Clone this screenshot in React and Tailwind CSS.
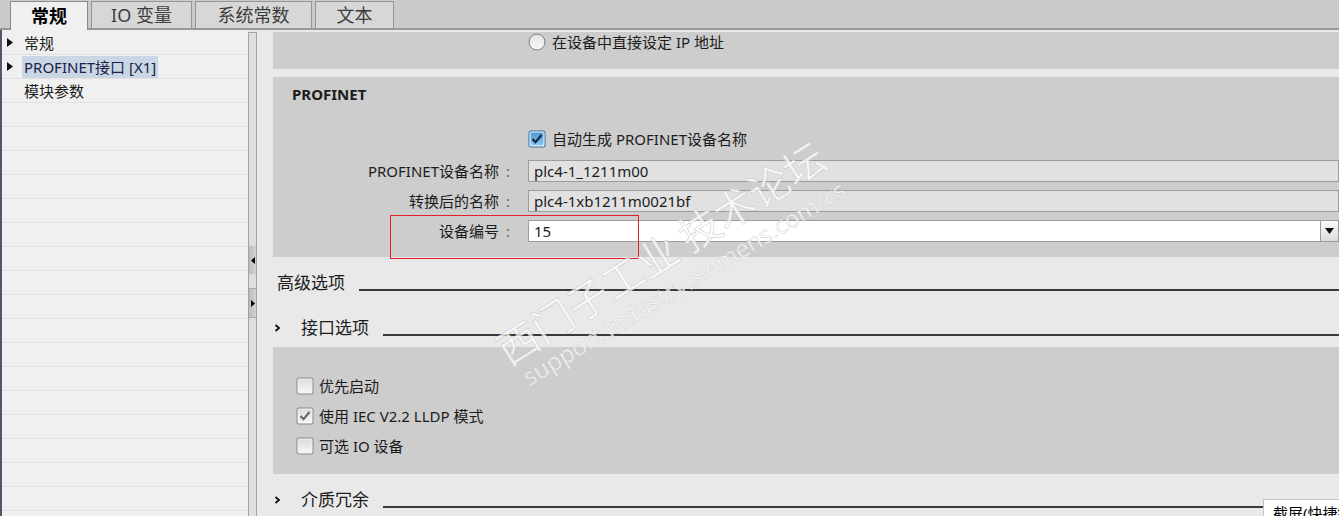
import React from 'react';

const fontStack = "font-['Noto_Sans','Noto_Sans_CJK_SC',sans-serif]";

const TreeArrow = () => (
  <svg width="6" height="9" viewBox="0 0 6 9">
    <path d="M0 0 L6 4.5 L0 9 Z" fill="#111" />
  </svg>
);

const Chevron = () => (
  <svg width="7" height="8" viewBox="0 0 7 8">
    <path d="M1.5 1 L5 4 L1.5 7" fill="none" stroke="#111" strokeWidth="1.8" />
  </svg>
);

const Radio = () => (
  <svg width="18" height="18" viewBox="0 0 18 18">
    <defs>
      <linearGradient id="rg" x1="0" y1="0" x2="0" y2="1">
        <stop offset="0" stopColor="#e2e2e2" />
        <stop offset="1" stopColor="#f8f8f8" />
      </linearGradient>
    </defs>
    <circle cx="9" cy="9" r="8" fill="url(#rg)" stroke="#7e7e7e" strokeWidth="1" />
  </svg>
);

const Checkbox = ({ checked, blue }) => (
  <svg width="18" height="18" viewBox="0 0 18 18">
    <defs>
      <linearGradient id="cbg" x1="0" y1="0" x2="0" y2="1">
        <stop offset="0" stopColor="#dcdcdc" />
        <stop offset="1" stopColor="#f6f6f6" />
      </linearGradient>
      <linearGradient id="cbb" x1="0" y1="0" x2="0" y2="1">
        <stop offset="0" stopColor="#4d9ad8" />
        <stop offset="1" stopColor="#8cc6f2" />
      </linearGradient>
    </defs>
    <rect x="0.5" y="0.5" width="17" height="17" rx="2.5" fill={blue ? '#2f6da3' : '#8a8a8a'} />
    <rect x="1.5" y="1.5" width="15" height="15" rx="1.5" fill={blue ? '#ffffff' : '#f4f4f4'} />
    <rect x="2.5" y="2.5" width="13" height="13" rx="1" fill={blue ? 'url(#cbb)' : 'url(#cbg)'} />
    {checked && (
      <path
        d="M4.5 9 L7.5 12.2 L13.5 5"
        fill="none"
        stroke={blue ? '#10263f' : '#6a6a6a'}
        strokeWidth="2.2"
      />
    )}
  </svg>
);

const Field = ({ label, value, white }) => (
  <div className="flex h-[22px] items-center">
    <div className="w-[226px] text-right leading-[22px]">{label}</div>
    <div className="w-[29px] pl-[7px] leading-[22px] text-[#666]">:</div>
    {white ? (
      <div className="flex-1 flex h-[22px]">
        <div className="flex-1 h-full bg-white border border-[#9c9c9c] border-r-0 pl-[5px] leading-[20px]">{value}</div>
        <div className="w-[19px] h-full border border-[#9c9c9c] bg-gradient-to-b from-[#fbfbfb] to-[#dcdcdc] flex items-center justify-center">
          <svg width="9" height="6" viewBox="0 0 9 6">
            <path d="M0 0 H9 L4.5 6 Z" fill="#111" />
          </svg>
        </div>
      </div>
    ) : (
      <div className="flex-1 h-[22px] bg-[#e1e1e1] border border-[#9c9c9c] pl-[5px] leading-[20px]">{value}</div>
    )}
  </div>
);

const Section = ({ title, chevron }) => (
  <div className="flex h-[26px] items-center">
    {chevron ? (
      <>
        <div className="w-[28px] pl-[1px] flex items-center"><Chevron /></div>
        <span className="text-[17px] leading-[26px]">{title}</span>
      </>
    ) : (
      <span className="pl-[4px] text-[17px] leading-[26px]">{title}</span>
    )}
    <div className="flex-1 ml-[14px] self-end mb-[5px] h-[2px] bg-[#3a3a3a]" />
  </div>
);

const tabs = [
  { name: '常规', w: 'w-[78px]', active: true },
  { name: 'IO 变量', w: 'w-[101px]' },
  { name: '系统常数', w: 'w-[117px]' },
  { name: '文本', w: 'w-[79px]' },
];

const App = () => {
  const rows = Array.from({ length: 20 });

  return (
    <div className={`relative w-[1339px] h-[516px] overflow-hidden bg-[#e9e9e9] text-[15px] text-[#1c1c1c] ${fontStack}`}>
      {/* tab strip */}
      <div className="h-[30px] bg-[#cacaca] flex items-end pl-[10px] gap-[3px] border-b-2 border-[#979797]">
        {tabs.map((t) =>
          t.active ? (
            <div
              key={t.name}
              className={`${t.w} h-[29px] -mb-[2px] bg-[#f0f0f0] border border-b-0 border-[#8c8c8c] flex items-center justify-center text-[18px] font-bold text-black z-10`}
            >
              {t.name}
            </div>
          ) : (
            <div
              key={t.name}
              className={`${t.w} h-[27px] bg-[#d7d7d7] border border-b-0 border-[#959595] flex items-center justify-center text-[18px] text-[#3d3d3d]`}
            >
              {t.name}
            </div>
          )
        )}
      </div>

      <div className="flex h-[486px]">
        {/* tree */}
        <div className="w-[248px] bg-[#f0f0f0] border-l-2 border-[#4f5768] pt-[1px] flex flex-col">
          {rows.map((_, i) => (
            <div key={i} className="h-[24px] shrink-0 border-b border-[#e2e2e2] flex items-center">
              <div className="w-[22px] pl-[5px] flex items-center">
                {(i === 0 || i === 1) && <TreeArrow />}
              </div>
              {i === 0 && <span className="leading-[22px]">常规</span>}
              {i === 1 && (
                <span className="bg-[#c9d7e5] px-[2px] -ml-[2px] leading-[22px] text-[#20204a]">PROFINET接口 [X1]</span>
              )}
              {i === 2 && <span className="leading-[22px]">模块参数</span>}
            </div>
          ))}
        </div>

        {/* splitter */}
        <div className="w-[9px] mt-[2px] bg-[#dedede] border-x border-[#a2a2a2] flex flex-col">
          <div className="h-[214px] border-t border-[#a2a2a2]" />
          <div className="h-[28px] bg-gradient-to-r from-[#bdbdbd] to-[#d2d2d2] flex items-center justify-center">
            <svg width="4" height="7" viewBox="0 0 4 7"><path d="M4 0 L0 3.5 L4 7 Z" fill="#000" /></svg>
          </div>
          <div className="h-[15px] border-b border-[#a8a8a8]" />
          <div className="h-[28px] bg-gradient-to-r from-[#bdbdbd] to-[#d2d2d2] flex items-center justify-center">
            <svg width="4" height="7" viewBox="0 0 4 7"><path d="M0 0 L4 3.5 L0 7 Z" fill="#000" /></svg>
          </div>
          <div className="flex-1 border-t border-[#a8a8a8]" />
        </div>

        {/* content */}
        <div className="flex-1 pl-[16px] pt-[2px] flex flex-col">
          <div className="h-[37px] bg-[#cdcdcd] pl-[255px] pt-[1px]">
            <div className="flex items-center gap-[6px] h-[18px]">
              <Radio />
              <span className="leading-[18px]">在设备中直接设定 IP 地址</span>
            </div>
          </div>

          <div className="mt-[8px] h-[180px] bg-[#cdcdcd] flex flex-col">
            <div className="pl-[19px] pt-[7px] h-[27px] font-bold leading-[20px] text-[15px]">PROFINET</div>
            <div className="mt-[25px] pl-[255px] flex items-center gap-[6px] h-[20px]">
              <Checkbox checked blue />
              <span className="leading-[20px]">自动生成 PROFINET设备名称</span>
            </div>
            <div className="mt-[11px] flex flex-col gap-[8px]">
              <Field label="PROFINET设备名称" value="plc4-1_1211m00" />
              <Field label="转换后的名称" value="plc4-1xb1211m0021bf" />
              <Field label="设备编号" value="15" white />
            </div>
          </div>

          <div className="mt-[13px]">
            <Section title="高级选项" />
          </div>
          <div className="mt-[19px]">
            <Section title="接口选项" chevron />
          </div>

          <div className="mt-[6px] h-[127px] bg-[#cdcdcd] pl-[23px] pt-[29px] flex flex-col gap-[10px]">
            <div className="flex items-center gap-[5px] h-[20px]">
              <Checkbox />
              <span className="leading-[20px]">优先启动</span>
            </div>
            <div className="flex items-center gap-[5px] h-[20px]">
              <Checkbox checked />
              <span className="leading-[20px]">使用 IEC V2.2 LLDP 模式</span>
            </div>
            <div className="flex items-center gap-[5px] h-[20px]">
              <Checkbox />
              <span className="leading-[20px]">可选 IO 设备</span>
            </div>
          </div>

          <div className="mt-[13px]">
            <Section title="介质冗余" chevron />
          </div>
        </div>
      </div>

      {/* red annotation frame */}
      <div className="absolute left-[390px] top-[215px] w-[249px] h-[44px] border border-[#e3202a]" />

      {/* watermark */}
      <div className="absolute left-[660px] top-[252px] -translate-x-1/2 -translate-y-1/2 rotate-[-32deg] whitespace-nowrap text-[41px] leading-none text-white/75 [-webkit-text-stroke:0.5px_#c8c8c8] font-['Noto_Sans_CJK_SC',sans-serif] pointer-events-none">
        西门子工业 技术论坛
      </div>
      <div className="absolute left-[684px] top-[283px] -translate-x-1/2 -translate-y-1/2 rotate-[-31deg] whitespace-nowrap text-[24px] leading-none text-white/75 [-webkit-text-stroke:0.4px_#c8c8c8] font-['Open_Sans',sans-serif] pointer-events-none">
        support.industry.siemens.com/cs
      </div>

      {/* tooltip */}
      <div className="absolute left-[1263px] top-[499px] bg-white border border-[#c4c4c4] pl-[9px] pr-[6px] pt-[3px] h-[30px] text-[15px] leading-[20px] text-black whitespace-nowrap">
        截屏(快捷键)
      </div>
    </div>
  );
};

export default App;
